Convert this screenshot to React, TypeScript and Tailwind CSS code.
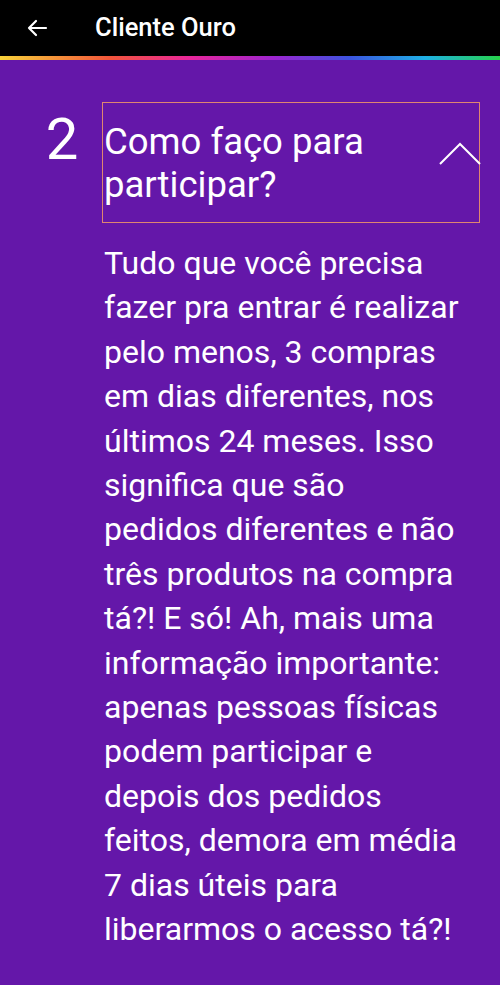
import React from 'react';

const body =
    'Tudo que você precisa fazer pra entrar é realizar pelo menos, 3 compras em dias diferentes, nos últimos 24 meses. Isso significa que são pedidos diferentes e não três produtos na compra tá?! E só! Ah, mais uma informação importante: apenas pessoas físicas podem participar e depois dos pedidos feitos, demora em média 7 dias úteis para liberarmos o acesso tá?!';

export default function App() {
    return (
        <div className="w-[500px] h-[985px] flex flex-col bg-[#6417a9] text-white font-['Roboto',sans-serif] overflow-hidden">
            {/* Header */}
            <div className="h-[56px] bg-black flex items-center flex-none">
                <svg width="22" height="18" viewBox="0 0 22 18" className="ml-[26px]" fill="none" stroke="white" strokeWidth="2.2" strokeLinecap="round" strokeLinejoin="round">
                    <path d="M20 9H3M10 2L3 9l7 7" />
                </svg>
                <span className="ml-[47px] text-[25.5px] font-medium leading-none">Cliente Ouro</span>
            </div>
            <div className="h-[4px] flex-none bg-[linear-gradient(90deg,#f7d23a_0%,#f2553a_22%,#e8269b_38%,#9b25d0_55%,#3c54e0_70%,#1fb0e6_85%,#27d24a_100%)]" />

            {/* Question */}
            <div className="flex pt-[42px]">
                <div className="w-[102px] flex-none flex justify-center pl-[22px]">
                    <span className="text-[58px] leading-none mt-[8px]">2</span>
                </div>
                <div className="flex-1 mr-[20px]">
                    <div className="border-[1.5px] border-[#e0866f] flex items-start pl-[1px] pt-[17px] pb-[16px] relative">
                        <h2 className="flex-1 text-[36.5px] leading-[43px] pr-[60px]">Como faço para participar?</h2>
                        <svg width="42" height="24" viewBox="0 0 42 24" className="absolute right-[-2px] top-[38px]" fill="none" stroke="white" strokeWidth="2">
                            <path d="M1 23L21 3l20 20" />
                        </svg>
                    </div>
                    <p className="mt-[18px] pl-[2px] text-[32px] leading-[44.4px] pr-[17px]">{body}</p>
                </div>
            </div>
        </div>
    );
}
